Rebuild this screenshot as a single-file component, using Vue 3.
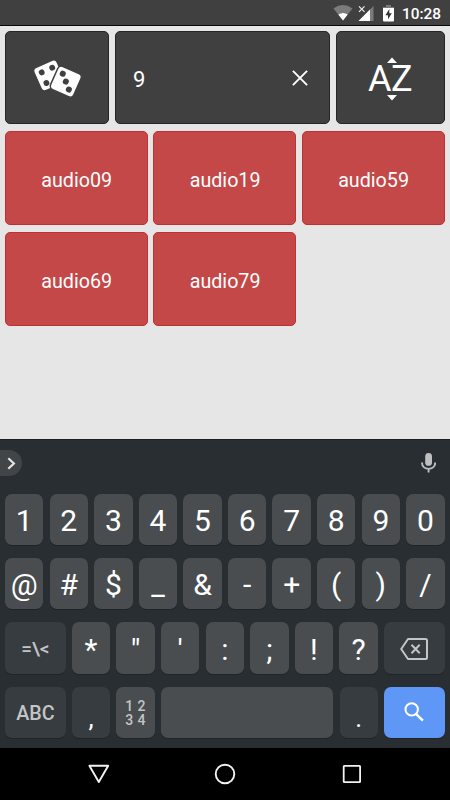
<template>
    <div class="screen">
        <header class="status">
            <svg class="wifi" width="20" height="16" viewBox="0 0 20 16">
                <path d="M0.5 3.4Q10-3.4 19.5 3.4L10 15.5Z" fill="#7b7b7b" />
                <path d="M5.3 9.4Q10 6.4 14.7 9.4L10 15.5Z" fill="#fff" />
            </svg>
            <svg class="signal" width="17" height="17" viewBox="0 0 17 17">
                <path d="M15.5 1V16H0.5Z" fill="#7b7b7b" />
                <path d="M12 4.5V16H0.5Z" fill="#fff" />
                <path d="M0 0H7V7.6H0Z" fill="#404040" />
                <path d="M1 1.3L6.5 6.8M6.5 1.3L1 6.8" stroke="#eee" stroke-width="1.2" />
            </svg>
            <svg class="battery" width="11" height="17" viewBox="0 0 11 17">
                <path d="M3 0H8V2H11V5H0V2H3Z" fill="#7b7b7b" />
                <path d="M0 3H11V15.5Q11 16.5 10 16.5H1Q0 16.5 0 15.5Z" fill="#fff" />
                <path d="M6.3 4L2.4 10.2H5V14.3L8.8 8.2H6.3Z" fill="#333" />
            </svg>
            <span class="time">10:28</span>
        </header>

        <main class="content">
            <div class="toolbar">
                <button class="tile dice">
                    <svg width="52" height="42" viewBox="0 0 52 42">
                        <g transform="translate(18.2 18.4) rotate(-24)">
                            <rect x="-12" y="-12" width="24" height="24" rx="3.4" fill="#fff" />
                            <g fill="#404040">
                                <circle cx="-5.6" cy="-5.8" r="2.9" />
                                <circle cx="5.9" cy="-5.8" r="2.9" />
                                <circle cx="-5.6" cy="5.8" r="2.9" />
                            </g>
                        </g>
                        <g transform="translate(34.8 24.6) rotate(24)">
                            <rect x="-12.7" y="-12.7" width="25.4" height="25.4" rx="4" fill="#fff" stroke="#404040" stroke-width="1.5" />
                            <g fill="#404040">
                                <circle cx="-6" cy="-6" r="3" />
                                <circle cx="0" cy="0" r="3" />
                                <circle cx="6" cy="6" r="3" />
                            </g>
                        </g>
                    </svg>
                </button>
                <div class="tile search">
                    <span>{{ query }}</span>
                    <svg class="clear" width="16" height="16" viewBox="0 0 16 16">
                        <path d="M0.9 0.9L15.1 15.1M15.1 0.9L0.9 15.1" stroke="#fff" stroke-width="1.9" />
                    </svg>
                </div>
                <button class="tile sort">
                    <svg width="10" height="6" viewBox="0 0 10 6"><path d="M5 0.5L10 6H0Z" fill="#fff" /></svg>
                    <span class="az">AZ</span>
                    <svg width="10" height="6" viewBox="0 0 10 6"><path d="M0 0H10L5 5.5Z" fill="#fff" /></svg>
                </button>
            </div>
            <div class="sounds">
                <button v-for="sound in sounds" :key="sound" class="sound">{{ sound }}</button>
            </div>
        </main>

        <section class="keyboard">
            <div class="suggest">
                <span class="expand">
                    <svg width="9" height="13" viewBox="0 0 9 13">
                        <path d="M1.3 1.2L6.9 6.5L1.3 11.8" fill="none" stroke="#e3e4e4" stroke-width="2.2" />
                    </svg>
                </span>
                <svg class="mic" width="15" height="20" viewBox="0 0 15 20">
                    <rect x="4.2" y="0" width="6.8" height="12.8" rx="3.4" fill="#bdbfc0" />
                    <path d="M1 9.5C1 18 14.2 18 14.2 9.5M7.6 15.8V19.5" fill="none" stroke="#bdbfc0" stroke-width="1.9" />
                </svg>
            </div>
            <div class="keys">
                <div class="row">
                    <span v-for="k in digits" :key="k" class="key">{{ k }}</span>
                </div>
                <div class="row">
                    <span v-for="k in symbols" :key="k" class="key">{{ k }}</span>
                </div>
                <div class="row">
                    <span class="key wide dark more">=\&lt;</span>
                    <span v-for="k in marks" :key="k" class="key">{{ k }}</span>
                    <span class="key wide dark">
                        <svg width="28" height="22" viewBox="0 0 28 22">
                            <path d="M8 1H25.5Q27 1 27 2.5V19.5Q27 21 25.5 21H8L1.2 11Z" fill="none" stroke="#c3c5c6" stroke-width="2" stroke-linejoin="round" />
                            <path d="M11.5 6.8L19.7 15.2M19.7 6.8L11.5 15.2" stroke="#c3c5c6" stroke-width="2" />
                        </svg>
                    </span>
                </div>
                <div class="row">
                    <span class="key wide dark abc">ABC</span>
                    <span class="key dark point">,</span>
                    <span class="key numpad"><span>1 2</span><span>3 4</span></span>
                    <span class="key space"></span>
                    <span class="key dark point">.</span>
                    <span class="key wide go">
                        <svg width="20" height="20" viewBox="0 0 20 20">
                            <circle cx="7.7" cy="7.4" r="6.2" fill="none" stroke="#fff" stroke-width="2" />
                            <path d="M12 11.8L18.9 18.7" stroke="#fff" stroke-width="2.5" />
                        </svg>
                    </span>
                </div>
            </div>
        </section>

        <nav class="navbar">
            <svg width="22" height="20" viewBox="0 0 22 20">
                <path d="M1.4 1.8H20.2L10.8 18Z" fill="none" stroke="#f2f2f2" stroke-width="1.9" stroke-linejoin="round" />
            </svg>
            <svg width="22" height="22" viewBox="0 0 22 22">
                <circle cx="11" cy="11" r="9.3" fill="none" stroke="#f2f2f2" stroke-width="1.9" />
            </svg>
            <svg width="22" height="20" viewBox="0 0 22 20">
                <rect x="3.7" y="1.8" width="16.4" height="16.4" rx="0.6" fill="none" stroke="#f2f2f2" stroke-width="1.8" />
            </svg>
        </nav>
    </div>
</template>

<script setup>
import { ref } from 'vue'

const query = ref('9')
const sounds = ref(['audio09', 'audio19', 'audio59', 'audio69', 'audio79'])

const digits = [...'1234567890']
const symbols = [...'@#$_&-+()/']
const marks = [...'*"\':;!?']
</script>

<style>
body {
    margin: 0;
}
</style>

<style scoped>
.screen {
    width: 450px;
    height: 800px;
    display: flex;
    flex-direction: column;
    overflow: hidden;
    background: #e6e6e6;
    color: #fff;
    font-family: Roboto, sans-serif;
}

svg {
    display: block;
    flex: none;
}

button {
    border: none;
    margin: 0;
    padding: 0;
    color: inherit;
    font-family: inherit;
}

.status {
    box-sizing: border-box;
    height: 26px;
    flex: none;
    display: flex;
    align-items: flex-start;
    padding: 5px 9px 0 0;
    justify-content: flex-end;
    background: #404040;
    border-bottom: 1px solid #080808;
}

.signal {
    margin-left: 5px;
}

.battery {
    margin-left: 8px;
}

.time {
    margin-left: 8px;
    font-size: 15.4px;
    font-weight: 500;
    line-height: 18px;
}

.content {
    height: 413px;
    flex: none;
    box-sizing: border-box;
    padding: 4.7px 5.5px 0 4.7px;
}

.toolbar {
    display: flex;
    gap: 5.8px;
    height: 93.6px;
}

.tile {
    box-sizing: border-box;
    display: flex;
    align-items: center;
    justify-content: center;
    background: #404040;
    border: 1px solid #262626;
    border-radius: 5px;
}

.dice {
    width: 104.6px;
    padding-top: 2px;
}

.search {
    flex: 1;
    justify-content: space-between;
    padding: 4px 21px 0 17px;
    font-size: 22px;
}

.clear {
    margin-top: -2px;
}

.sort {
    width: 109px;
    flex-direction: column;
    padding: 4px 0 0 3px;
}

.az {
    font-size: 36px;
    line-height: 26px;
    height: 26px;
    margin: 3px 3px 3px 0;
    letter-spacing: -0.5px;
}

.sounds {
    display: grid;
    grid-template-columns: repeat(3, 1fr);
    grid-auto-rows: 93.8px;
    gap: 7px 5.6px;
    margin-top: 7.2px;
}

.sound {
    background: #c54848;
    border: 1px solid #c43030;
    border-radius: 5px;
    padding: 4px 0 0 1px;
    font-size: 19.7px;
}

.keyboard {
    box-sizing: border-box;
    height: 309px;
    flex: none;
    background: #292e32;
    border-top: 1px solid #1b2024;
}

.suggest {
    height: 53.7px;
    display: flex;
    justify-content: space-between;
    align-items: flex-start;
}

.expand {
    display: flex;
    align-items: center;
    box-sizing: border-box;
    width: 22px;
    height: 26px;
    margin-top: 10px;
    padding-left: 7px;
    border-radius: 0 13px 13px 0;
    background: #414548;
}

.mic {
    margin: 13px 14px 0 0;
}

.keys {
    display: flex;
    flex-direction: column;
    gap: 12.8px;
    padding: 0 5.2px 0 5px;
}

.row {
    display: flex;
    gap: 6.2px;
    height: 51.5px;
}

.key {
    flex: 0 0 38.4px;
    display: flex;
    align-items: center;
    justify-content: center;
    padding-top: 2px;
    box-sizing: border-box;
    border-radius: 7px;
    background: #494d4f;
    box-shadow: 0 1px 0 #202428;
    font-size: 30px;
}

.wide {
    flex-basis: 60.7px;
}

.dark {
    background: #373c40;
}

.more {
    color: #c3c5c6;
    font-size: 19px;
    font-weight: 500;
    padding-top: 0;
}

.abc {
    color: #c3c5c6;
    font-size: 19.7px;
    font-weight: 500;
}

.point {
    font-size: 26px;
    padding-top: 11px;
}

.numpad {
    flex-direction: column;
    padding-top: 2px;
    color: #c3c5c6;
    font-size: 14px;
    line-height: 14.7px;
    letter-spacing: 0.5px;
    font-weight: 500;
}

.space {
    flex: 1;
}

.go {
    background: #5e97f6;
    padding-top: 0;
}

.navbar {
    flex: 1;
    display: flex;
    align-items: center;
    justify-content: space-between;
    padding: 0 88px;
    background: #000;
}
</style>
